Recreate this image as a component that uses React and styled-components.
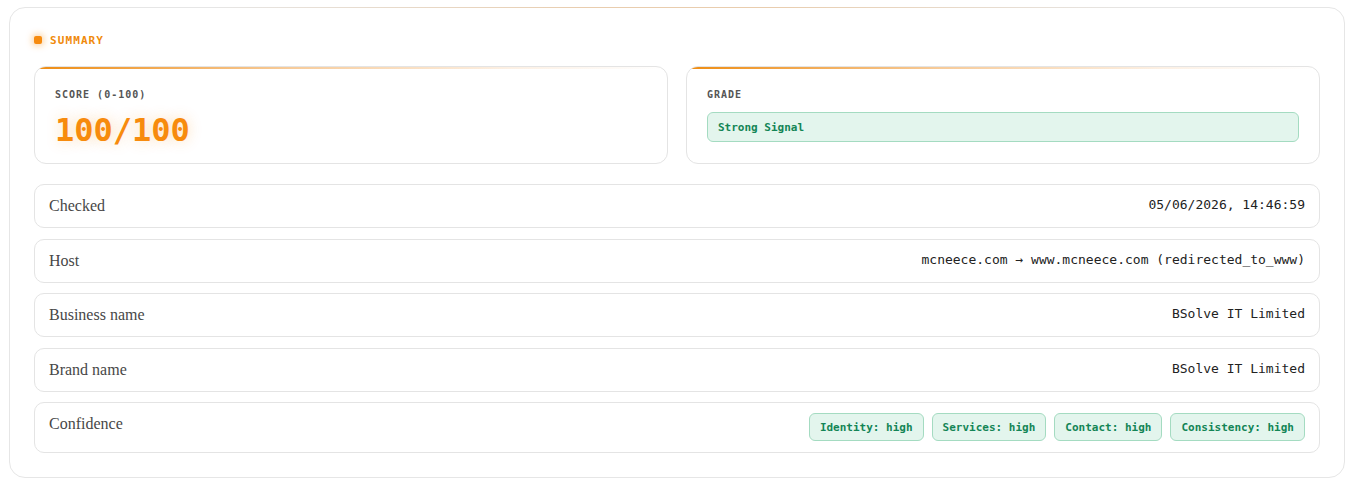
import React from 'react';
import styled, { createGlobalStyle } from 'styled-components';

const GlobalStyle = createGlobalStyle`
  body {
    margin: 0;
    background: #fff;
    font-family: "Liberation Sans", Arial, sans-serif;
  }
`;

const rows = [
  { label: 'Checked', value: '05/06/2026, 14:46:59' },
  { label: 'Host', value: 'mcneece.com → www.mcneece.com (redirected_to_www)' },
  { label: 'Business name', value: 'BSolve IT Limited' },
  { label: 'Brand name', value: 'BSolve IT Limited' },
];

const confidence = ['Identity: high', 'Services: high', 'Contact: high', 'Consistency: high'];

function App() {
  return (
    <Page>
      <GlobalStyle />
      <Card>
        <Header>
          <Dot />
          <HeaderTitle>Summary</HeaderTitle>
        </Header>
        <ScoreGrid>
          <StatCard>
            <StatLabel>Score (0-100)</StatLabel>
            <ScoreValue>100/100</ScoreValue>
          </StatCard>
          <StatCard>
            <StatLabel>Grade</StatLabel>
            <GradeBadge>Strong Signal</GradeBadge>
          </StatCard>
        </ScoreGrid>
        <Rows>
          {rows.map((r) => (
            <Row key={r.label}>
              <RowLabel>{r.label}</RowLabel>
              <RowValue>{r.value}</RowValue>
            </Row>
          ))}
          <Row>
            <RowLabel>Confidence</RowLabel>
            <Chips>
              {confidence.map((c) => (
                <Chip key={c}>{c}</Chip>
              ))}
            </Chips>
          </Row>
        </Rows>
      </Card>
    </Page>
  );
}

export default App;

const Page = styled.div`
  padding: 7px 4px 6px 9px;
`;

const Card = styled.section`
  position: relative;
  border: 1px solid #e6e6e6;
  border-radius: 16px;
  padding: 24px;
  background: #fff;

  &::before {
    content: '';
    position: absolute;
    top: -1px;
    left: 200px;
    right: 200px;
    height: 1px;
    background: linear-gradient(90deg, rgba(240, 140, 30, 0) 0%, rgba(240, 140, 30, 0.28) 40%, rgba(240, 140, 30, 0.28) 60%, rgba(240, 140, 30, 0) 100%);
  }
`;

const Header = styled.div`
  display: flex;
  align-items: center;
  gap: 8px;
  height: 16px;
  margin-bottom: 18px;
`;

const Dot = styled.span`
  width: 8px;
  height: 8px;
  border-radius: 2px;
  background: #f68b0f;
  box-shadow: 0 0 6px 2px rgba(246, 139, 15, 0.35);
`;

const HeaderTitle = styled.h2`
  margin: 0;
  font-family: "DejaVu Sans Mono", "Liberation Mono", monospace;
  font-size: 11px;
  font-weight: 700;
  letter-spacing: 1.1px;
  text-transform: uppercase;
  color: #f08a0c;
`;

const ScoreGrid = styled.div`
  display: grid;
  grid-template-columns: 1fr 1fr;
  gap: 18px;
  margin-bottom: 20px;
`;

const StatCard = styled.div`
  position: relative;
  display: flex;
  flex-direction: column;
  align-items: stretch;
  border: 1px solid #e4e4e4;
  border-radius: 12px;
  padding: 21px 20px 15px;
  min-height: 97px;
  box-sizing: border-box;
  overflow: hidden;

  &::before {
    content: '';
    position: absolute;
    top: 0;
    left: 0;
    right: 0;
    height: 2px;
    background: linear-gradient(90deg, #ee8c12 0%, rgba(240, 160, 70, 0.55) 40%, rgba(240, 180, 120, 0.2) 75%, rgba(255, 255, 255, 0) 100%);
  }
`;

const StatLabel = styled.div`
  font-family: "DejaVu Sans Mono", "Liberation Mono", monospace;
  font-size: 10px;
  line-height: 14px;
  font-weight: 700;
  letter-spacing: 1px;
  text-transform: uppercase;
  color: #555;
  margin-bottom: 10px;
`;

const ScoreValue = styled.div`
  font-family: "DejaVu Sans Mono", "Liberation Mono", monospace;
  font-size: 32px;
  line-height: 36px;
  font-weight: 700;
  color: #f78b0d;
  text-shadow: 0 0 14px rgba(247, 139, 13, 0.3);
`;

const GradeBadge = styled.div`
  height: 30px;
  box-sizing: border-box;
  display: flex;
  align-items: center;
  padding: 0 10px;
  background: #e3f5ed;
  border: 1px solid #a4dbc1;
  border-radius: 6px;
  font-family: "DejaVu Sans Mono", "Liberation Mono", monospace;
  font-size: 11px;
  font-weight: 700;
  color: #138556;
`;

const Rows = styled.div`
  display: flex;
  flex-direction: column;
  gap: 10.5px;
`;

const Row = styled.div`
  display: flex;
  align-items: flex-start;
  justify-content: space-between;
  gap: 16px;
  border: 1px solid #e4e4e4;
  border-radius: 10px;
  padding: 10px 14px;
  min-height: 22px;
`;

const RowLabel = styled.div`
  font-family: "Liberation Serif", "Times New Roman", serif;
  font-size: 16px;
  line-height: 22px;
  color: #474747;
`;

const RowValue = styled.div`
  font-family: "DejaVu Sans Mono", "Liberation Mono", monospace;
  font-size: 13px;
  line-height: 20px;
  color: #222;
  text-align: right;
`;

const Chips = styled.div`
  display: flex;
  gap: 8px;
  flex-wrap: wrap;
  justify-content: flex-end;
  padding-bottom: 1px;
`;

const Chip = styled.span`
  height: 28px;
  box-sizing: border-box;
  display: inline-flex;
  align-items: center;
  padding: 0 10px;
  background: #e3f5ed;
  border: 1px solid #a4dbc1;
  border-radius: 6px;
  font-family: "DejaVu Sans Mono", "Liberation Mono", monospace;
  font-size: 11px;
  font-weight: 700;
  color: #138556;
`;
